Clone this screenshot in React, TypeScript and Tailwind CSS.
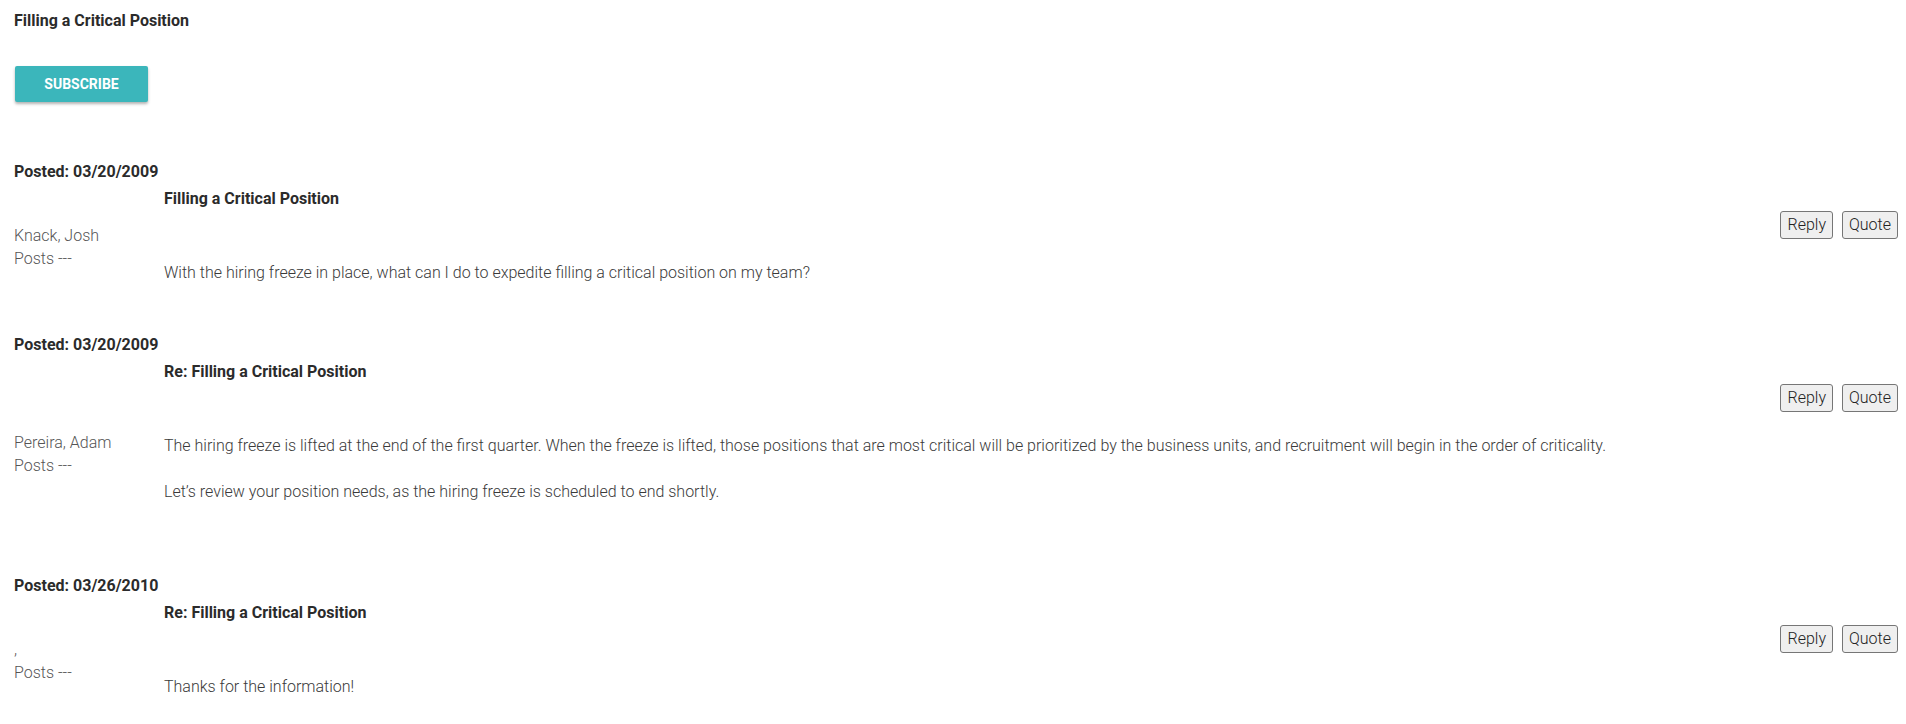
import React from "react";

type Post = {
  date: string;
  title: string;
  author: string;
  paragraphs: string[];
  trailing?: boolean;
};

const posts: Post[] = [
  {
    date: "03/20/2009",
    title: "Filling a Critical Position",
    author: "Knack, Josh",
    paragraphs: [
      "With the hiring freeze in place, what can I do to expedite filling a critical position on my team?",
    ],
  },
  {
    date: "03/20/2009",
    title: "Re: Filling a Critical Position",
    author: "Pereira, Adam",
    paragraphs: [
      "The hiring freeze is lifted at the end of the first quarter. When the freeze is lifted, those positions that are most critical will be prioritized by the business units, and recruitment will begin in the order of criticality.",
      "Let\u2019s review your position needs, as the hiring freeze is scheduled to end shortly.",
    ],
    trailing: true,
  },
  {
    date: "03/26/2010",
    title: "Re: Filling a Critical Position",
    author: ",",
    paragraphs: ["Thanks for the information!"],
  },
];

function SmallButton({ label }: { label: string }) {
  return (
    <button className="h-[28px] px-[6px] border border-[#767676] rounded-[3px] bg-[#efefef] text-[16px] font-light leading-[20px] text-[#222]">
      {label}
    </button>
  );
}

function PostBlock({ post, first }: { post: Post; first: boolean }) {
  return (
    <div className={first ? "mt-[60px]" : "mt-[52px]"}>
      <div className="text-[16px] font-bold leading-[20px] text-[#2b2b2b]">Posted: {post.date}</div>
      <div className="mt-[7px] pl-[150px] text-[16px] font-bold leading-[20px] text-[#2b2b2b]">{post.title}</div>
      <div className="mt-[2px] flex items-center">
        <div className="w-[150px] shrink-0 text-[16px] font-light leading-[23px] text-[#555]">
          <div>{post.author}</div>
          <div>Posts ---</div>
        </div>
        <div className={"flex-1 " + (post.trailing ? "pb-[22px]" : "")}>
          <div className="flex justify-end gap-[9px]">
            <SmallButton label="Reply" />
            <SmallButton label="Quote" />
          </div>
          {post.paragraphs.map((p, i) => (
            <div
              key={i}
              className={(i === 0 ? "mt-[24px]" : "mt-[26px]") + " text-[16px] font-light leading-[20px] text-[#3a3a3a]"}
            >
              {p}
            </div>
          ))}
        </div>
      </div>
    </div>
  );
}

export default function App() {
  return (
    <div
      className="min-h-screen bg-white pl-[14px] pr-[8px] pt-[11px]"
      style={{ fontFamily: "Roboto, 'Noto Sans', sans-serif" }}
    >
      <div className="text-[16px] font-bold leading-[20px] text-[#2b2b2b]">Filling a Critical Position</div>
      <button className="mt-[35px] ml-px w-[133px] h-[36px] rounded-[2px] bg-[#3bb6bb] text-white text-[14px] font-bold uppercase leading-[20px] shadow-[0_2px_3px_rgba(0,0,0,0.3)]">
        Subscribe
      </button>
      {posts.map((p, i) => (
        <PostBlock key={i} post={p} first={i === 0} />
      ))}
    </div>
  );
}
